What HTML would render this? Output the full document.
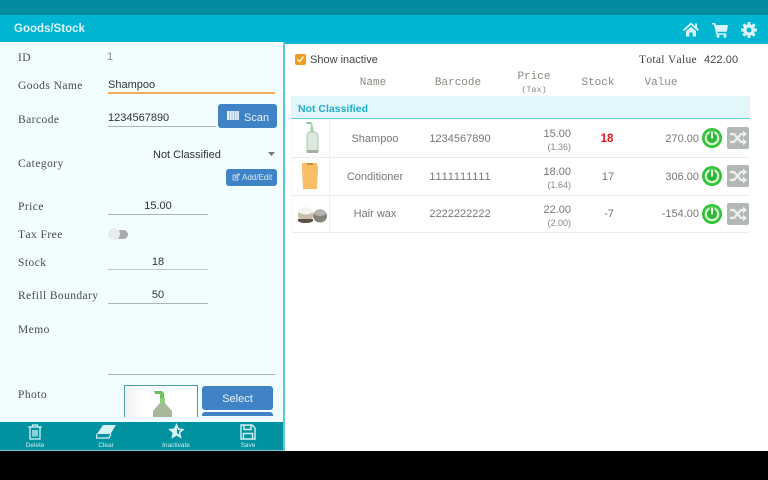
<!DOCTYPE html>
<html><head><meta charset="utf-8"><style>
html,body{margin:0;padding:0;background:#000}
#p{position:relative;width:768px;height:480px;overflow:hidden;background:#000;font-family:"Liberation Sans",sans-serif;filter:blur(.3px);font-kerning:none}
#p div,#p svg{position:absolute}
.t{white-space:nowrap;line-height:14px}
.l{font-family:"Liberation Serif",serif;font-size:11.5px;color:#4c4c4c;letter-spacing:.45px}
.v{font-size:11px;color:#333}
.c{text-align:center}
.r{text-align:right}
.h{font-family:"Liberation Mono",monospace;font-size:11px;color:#8a8a80;text-align:center}
.g{font-size:11px;color:#777;text-align:center}
.s{font-size:9px;color:#888;text-align:right}
.ln{height:1px;background:#a9b5b5}
.b{background:#3f83c6;border-radius:3px;color:#e8f3fb;text-align:center}
.bt{font-size:6.5px;color:#cfeef2;text-align:center;line-height:8px}
.sep{left:291px;width:459px;height:1px;background:#e6eeee}
</style></head><body><div id="p">
<div style="left:0;top:0;width:768px;height:15px;background:#008c9e"></div>
<div style="left:0;top:15px;width:768px;height:27px;background:#00b5d1"></div>
<div class="t" style="left:14px;top:22px;font-size:11.5px;font-weight:bold;color:#dff6fa">Goods/Stock</div>
<svg style="left:683px;top:22px" width="16" height="15" viewBox="0 0 16 15"><path d="M.5 8.300L8 1.700l7.500 6.600" fill="none" stroke="#d9f5fa" stroke-width="1.800"/><path d="M12 1.500h2V6l-2-1.500zM3 9l5-4.300L13 9v5.500H9.700v-4H6.300v4H3z" fill="#d9f5fa"/></svg>
<svg style="left:712px;top:23px" width="16" height="15" viewBox="0 0 16 15"><path d="M0 0h3.200l.6 2H16l-1.300 6.800H5.400l.3 1.500H14.500v1.500H4.300L2 1.500H0z" fill="#d9f5fa"/><circle cx="6" cy="13.300" r="1.500" fill="#d9f5fa"/><circle cx="13" cy="13.300" r="1.500" fill="#d9f5fa"/></svg>
<svg style="left:741px;top:22px" width="16" height="16" viewBox="0 0 16 16"><circle cx="8" cy="8" r="5.800" fill="#d9f5fa"/><path d="M8 0v16M0 8h16M2.300 2.300l11.400 11.400M13.700 2.300L2.300 13.700" stroke="#d9f5fa" stroke-width="3"/><circle cx="8" cy="8" r="2.500" fill="#00b5d1"/></svg>

<div style="left:0;top:42px;width:283px;height:409px;background:#f1fdfe"></div>
<div style="left:283px;top:42px;width:2px;height:409px;background:#5cc9d6"></div>
<div style="left:285px;top:42px;width:483px;height:409px;background:#fff"></div>
<div style="left:285px;top:42px;width:483px;height:2px;background:#1ab9cf"></div>

<div class="t l" style="left:18px;top:51px">ID</div>
<div class="t" style="left:107px;top:50px;font-size:11px;color:#888">1</div>
<div class="t l" style="left:18px;top:79px">Goods Name</div>
<div class="t v" style="left:108px;top:78px">Shampoo</div>
<div style="left:108px;top:92px;width:167px;height:2px;background:#f5a95e"></div>
<div class="t l" style="left:18px;top:113px">Barcode</div>
<div class="t v" style="left:108px;top:111px">1234567890</div>
<div class="ln" style="left:108px;top:126px;width:108px"></div>
<div class="b" style="left:218px;top:104px;width:59px;height:24px"></div>
<svg style="left:227px;top:111px" width="12" height="9"><path d="M0 0h12v9H0z" fill="#e3eef9"/><path d="M2.500 0v9M5 0v9M7.500 0v9M10 0v9" stroke="#a4c3e4"/></svg>
<div class="t" style="left:244px;top:111px;font-size:11px;color:#e8f3fb">Scan</div>
<div class="t l" style="left:18px;top:157px">Category</div>
<div class="t v" style="left:153px;top:148px;font-size:11px">Not Classified</div>
<svg style="left:268px;top:152px" width="7" height="5"><path d="M0 0h7L3.500 4z" fill="#777"/></svg>
<div class="b" style="left:226px;top:169px;width:51px;height:17px"></div>
<svg style="left:232px;top:173px" width="8" height="8" viewBox="0 0 8 8"><path d="M6 4.500V7H1V2h3M3 5l.3-1.500L6.500.5 7.500 1.500 4.500 4.700z" fill="none" stroke="#dcebf8" stroke-width=".8"/></svg>
<div class="t" style="left:242px;top:171px;font-size:8px;color:#dcebf8">Add/Edit</div>
<div class="t l" style="left:18px;top:200px">Price</div>
<div class="t v c" style="left:108px;top:199px;width:100px">15.00</div>
<div class="ln" style="left:108px;top:214px;width:100px"></div>
<div class="t l" style="left:18px;top:228px">Tax Free</div>
<div style="left:112px;top:230px;width:16px;height:9px;border-radius:5px;background:#a9adad"></div>
<div style="left:108px;top:228px;width:12px;height:12px;border-radius:6px;background:#e9eded"></div>
<div class="t l" style="left:18px;top:256px">Stock</div>
<div class="t v c" style="left:108px;top:255px;width:100px">18</div>
<div class="ln" style="left:108px;top:269px;width:100px;background:#bccaca"></div>
<div class="t l" style="left:18px;top:289px;letter-spacing:.4px">Refill Boundary</div>
<div class="t v c" style="left:108px;top:288px;width:100px">50</div>
<div class="ln" style="left:108px;top:303px;width:100px"></div>
<div class="t l" style="left:18px;top:323px">Memo</div>
<div class="ln" style="left:108px;top:374px;width:167px"></div>
<div class="t l" style="left:18px;top:388px">Photo</div>
<div style="left:124px;top:385px;width:72px;height:31px;border:1px solid #4d9aa8;border-bottom:0;background:linear-gradient(90deg,#f0f0f0,#fff 25%);overflow:hidden">
<svg style="left:26px;top:4px" width="26" height="28" viewBox="0 0 26 28"><path d="M3 1h8l2 2v5h-4V4H4z" fill="#6fbf5f"/><path d="M9 8h5v6H9z" fill="#8ccf78"/><path d="M9 13h5l7 8v7H2v-7z" fill="#a8b89c"/></svg></div>
<div class="b" style="left:202px;top:386px;width:71px;height:24px"></div>
<div class="t c" style="left:202px;top:392px;width:71px;font-size:11px;color:#e8f3fb">Select</div>
<div style="left:202px;top:412px;width:71px;height:4px;background:#3f83c6;border-radius:3px 3px 0 0"></div>

<div style="left:0;top:422px;width:283px;height:29px;background:#00929f"></div>
<div style="left:0;top:450px;width:283px;height:1px;background:#7cc6cf"></div>
<svg style="left:28px;top:424px" width="14" height="16" viewBox="0 0 14 16" fill="none" stroke="#d5f2f5" stroke-width="1.300"><path d="M0 3h14M4.500 3V1h5v2M2 3v12h10V3M5 6v6.500M7 6v6.500M9 6v6.500"/></svg>
<svg style="left:96px;top:425px" width="20" height="14" viewBox="0 0 20 14"><path d="M7 0h13l-5.500 9H1z" fill="#d5f2f5"/><path d="M1 9l-1 4h13l2-4" fill="none" stroke="#d5f2f5" stroke-width="1.200"/></svg>
<svg style="left:168px;top:423px" width="17" height="16" viewBox="0 0 17 16"><path d="M8.500 0l2.400 5.400 5.800.6-4.300 3.900 1.200 5.800-5.100-3-5.100 3 1.200-5.800L.3 6l5.800-.6z" fill="#d5f2f5"/><path d="M9 4.500l1.200 2.500 2.500.2-1.900 1.700.5 2.500L9 10z" fill="#00929f"/></svg>
<svg style="left:240px;top:424px" width="16" height="16" viewBox="0 0 16 16" fill="none" stroke="#d5f2f5" stroke-width="1.400"><path d="M1 1h11l3 3v11H1zM4 1v4.500h7V1M3.500 15V9.500h9V15"/></svg>
<div class="t bt" style="left:15px;top:442px;width:40px">Delete</div>
<div class="t bt" style="left:86px;top:442px;width:40px">Clear</div>
<div class="t bt" style="left:156px;top:442px;width:40px">Inactivate</div>
<div class="t bt" style="left:228px;top:442px;width:40px">Save</div>

<div style="left:295px;top:54px;width:11px;height:11px;border-radius:2px;background:#f39a1f"></div>
<svg style="left:296px;top:55px" width="9" height="9"><path d="M1.500 4.500l2 2 4-5" fill="none" stroke="#fff" stroke-width="1.300"/></svg>
<div class="t" style="left:310px;top:53px;font-size:11px;color:#444">Show inactive</div>
<div class="t" style="left:639px;top:53px;font-family:'Liberation Serif',serif;font-size:11.500px;color:#444;letter-spacing:.3px">Total Value</div>
<div class="t" style="left:704px;top:53px;font-size:11px;color:#444;letter-spacing:.1px">422.00</div>

<div class="t h" style="left:340px;top:76px;width:66px">Name</div>
<div class="t h" style="left:425px;top:76px;width:66px">Barcode</div>
<div class="t h" style="left:501px;top:70px;width:66px">Price</div>
<div class="t h" style="left:501px;top:83px;width:66px;font-size:8.500px">(Tax)</div>
<div class="t h" style="left:565px;top:76px;width:66px">Stock</div>
<div class="t h" style="left:628px;top:76px;width:66px">Value</div>

<div style="left:291px;top:96px;width:459px;height:22px;background:#e2f6fb"></div>
<div style="left:291px;top:118px;width:459px;height:1px;background:#5fcfdf"></div>
<div class="t" style="left:298px;top:102px;font-size:10.500px;font-weight:bold;color:#1db0cb">Not Classified</div>

<div class="sep" style="top:157px"></div>
<div class="sep" style="top:195px"></div>
<div class="sep" style="top:232px"></div>
<div style="left:329px;top:119px;width:1px;height:113px;background:#e3f3f6"></div>
<div style="left:291px;top:119px;width:1px;height:113px;background:#f3f8f8"></div>

<svg style="left:300px;top:121px" width="22" height="34" viewBox="0 0 22 34"><path d="M6 1h5l1.500 2v4H11V3H7z" fill="#8ccf90"/><path d="M10.500 6h3v5h-3z" fill="#9fd6a5"/><path d="M9 11h6l3 3v17H7V14z" fill="#dbe9df" stroke="#a5c8aa"/><path d="M7 29h11v3H7z" fill="#a8ae9f"/></svg>
<svg style="left:300px;top:160px" width="20" height="32" viewBox="0 0 20 32"><path d="M2 3h15l1 5-1 21H3L2 8z" fill="#f8bd66"/><path d="M7 3h6v2H7z" fill="#c98a3c"/></svg>
<svg style="left:296px;top:204px" width="32" height="22" viewBox="0 0 32 22"><ellipse cx="9.500" cy="11" rx="7.500" ry="7.500" fill="#c9bda8"/><ellipse cx="9.500" cy="7" rx="7" ry="3.500" fill="#f2f2ee"/><path d="M2 15h15v2a8 3 0 0 1-15 0z" fill="#5a5048"/><ellipse cx="24" cy="12" rx="7" ry="6.500" fill="#85827c"/><ellipse cx="24" cy="9" rx="6" ry="3" fill="#b5b3ad"/></svg>

<div class="t g" style="left:335px;top:132px;width:80px">Shampoo</div>
<div class="t g" style="left:335px;top:170px;width:80px">Conditioner</div>
<div class="t g" style="left:335px;top:207px;width:80px">Hair wax</div>
<div class="t g" style="left:420px;top:132px;width:80px">1234567890</div>
<div class="t g" style="left:420px;top:170px;width:80px">1111111111</div>
<div class="t g" style="left:420px;top:207px;width:80px">2222222222</div>

<div class="t g r" style="left:521px;top:127px;width:50px;text-align:right">15.00</div>
<div class="t s" style="left:521px;top:140px;width:50px">(1.36)</div>
<div class="t g r" style="left:521px;top:165px;width:50px;text-align:right">18.00</div>
<div class="t s" style="left:521px;top:178px;width:50px">(1.64)</div>
<div class="t g r" style="left:521px;top:203px;width:50px;text-align:right">22.00</div>
<div class="t s" style="left:521px;top:216px;width:50px">(2.00)</div>

<div class="t c" style="left:587px;top:132px;width:40px;font-size:11.500px;font-weight:bold;color:#e3141f">18</div>
<div class="t g" style="left:587px;top:170px;width:42px">17</div>
<div class="t g" style="left:588px;top:207px;width:42px">-7</div>

<div class="t g" style="left:639px;top:132px;width:60px;text-align:right">270.00</div>
<div class="t g" style="left:639px;top:170px;width:60px;text-align:right">306.00</div>
<div class="t g" style="left:639px;top:207px;width:60px;text-align:right">-154.00</div>

<svg style="left:702px;top:128px" width="20" height="20"><circle cx="10" cy="10" r="10" fill="#33c23a"/><circle cx="10" cy="10" r="6.200" fill="#2fb838" stroke="#d6f8d0" stroke-width="2.200"/><path d="M10 3v8" stroke="#2fb838" stroke-width="4.500"/><path d="M10 3.500v7" stroke="#eafbe8" stroke-width="2"/></svg>
<svg style="left:702px;top:166px" width="20" height="20"><circle cx="10" cy="10" r="10" fill="#33c23a"/><circle cx="10" cy="10" r="6.200" fill="#2fb838" stroke="#d6f8d0" stroke-width="2.200"/><path d="M10 3v8" stroke="#2fb838" stroke-width="4.500"/><path d="M10 3.500v7" stroke="#eafbe8" stroke-width="2"/></svg>
<svg style="left:702px;top:204px" width="20" height="20"><circle cx="10" cy="10" r="10" fill="#33c23a"/><circle cx="10" cy="10" r="6.200" fill="#2fb838" stroke="#d6f8d0" stroke-width="2.200"/><path d="M10 3v8" stroke="#2fb838" stroke-width="4.500"/><path d="M10 3.500v7" stroke="#eafbe8" stroke-width="2"/></svg>

<svg style="left:727px;top:127px" width="22" height="22"><rect width="22" height="22" rx="2" fill="#b4b8b4"/><path d="M3 7h4l7 8h3M3 15h4l7-8h3" fill="none" stroke="#eef0ee" stroke-width="2.200"/><path d="M16 3.500l4 3.500-4 3.500zM16 11.500l4 3.500-4 3.500z" fill="#eef0ee"/></svg>
<svg style="left:727px;top:165px" width="22" height="22"><rect width="22" height="22" rx="2" fill="#b4b8b4"/><path d="M3 7h4l7 8h3M3 15h4l7-8h3" fill="none" stroke="#eef0ee" stroke-width="2.200"/><path d="M16 3.500l4 3.500-4 3.500zM16 11.500l4 3.500-4 3.500z" fill="#eef0ee"/></svg>
<svg style="left:727px;top:203px" width="22" height="22"><rect width="22" height="22" rx="2" fill="#b4b8b4"/><path d="M3 7h4l7 8h3M3 15h4l7-8h3" fill="none" stroke="#eef0ee" stroke-width="2.200"/><path d="M16 3.500l4 3.500-4 3.500zM16 11.500l4 3.500-4 3.500z" fill="#eef0ee"/></svg>
</div></body></html>
